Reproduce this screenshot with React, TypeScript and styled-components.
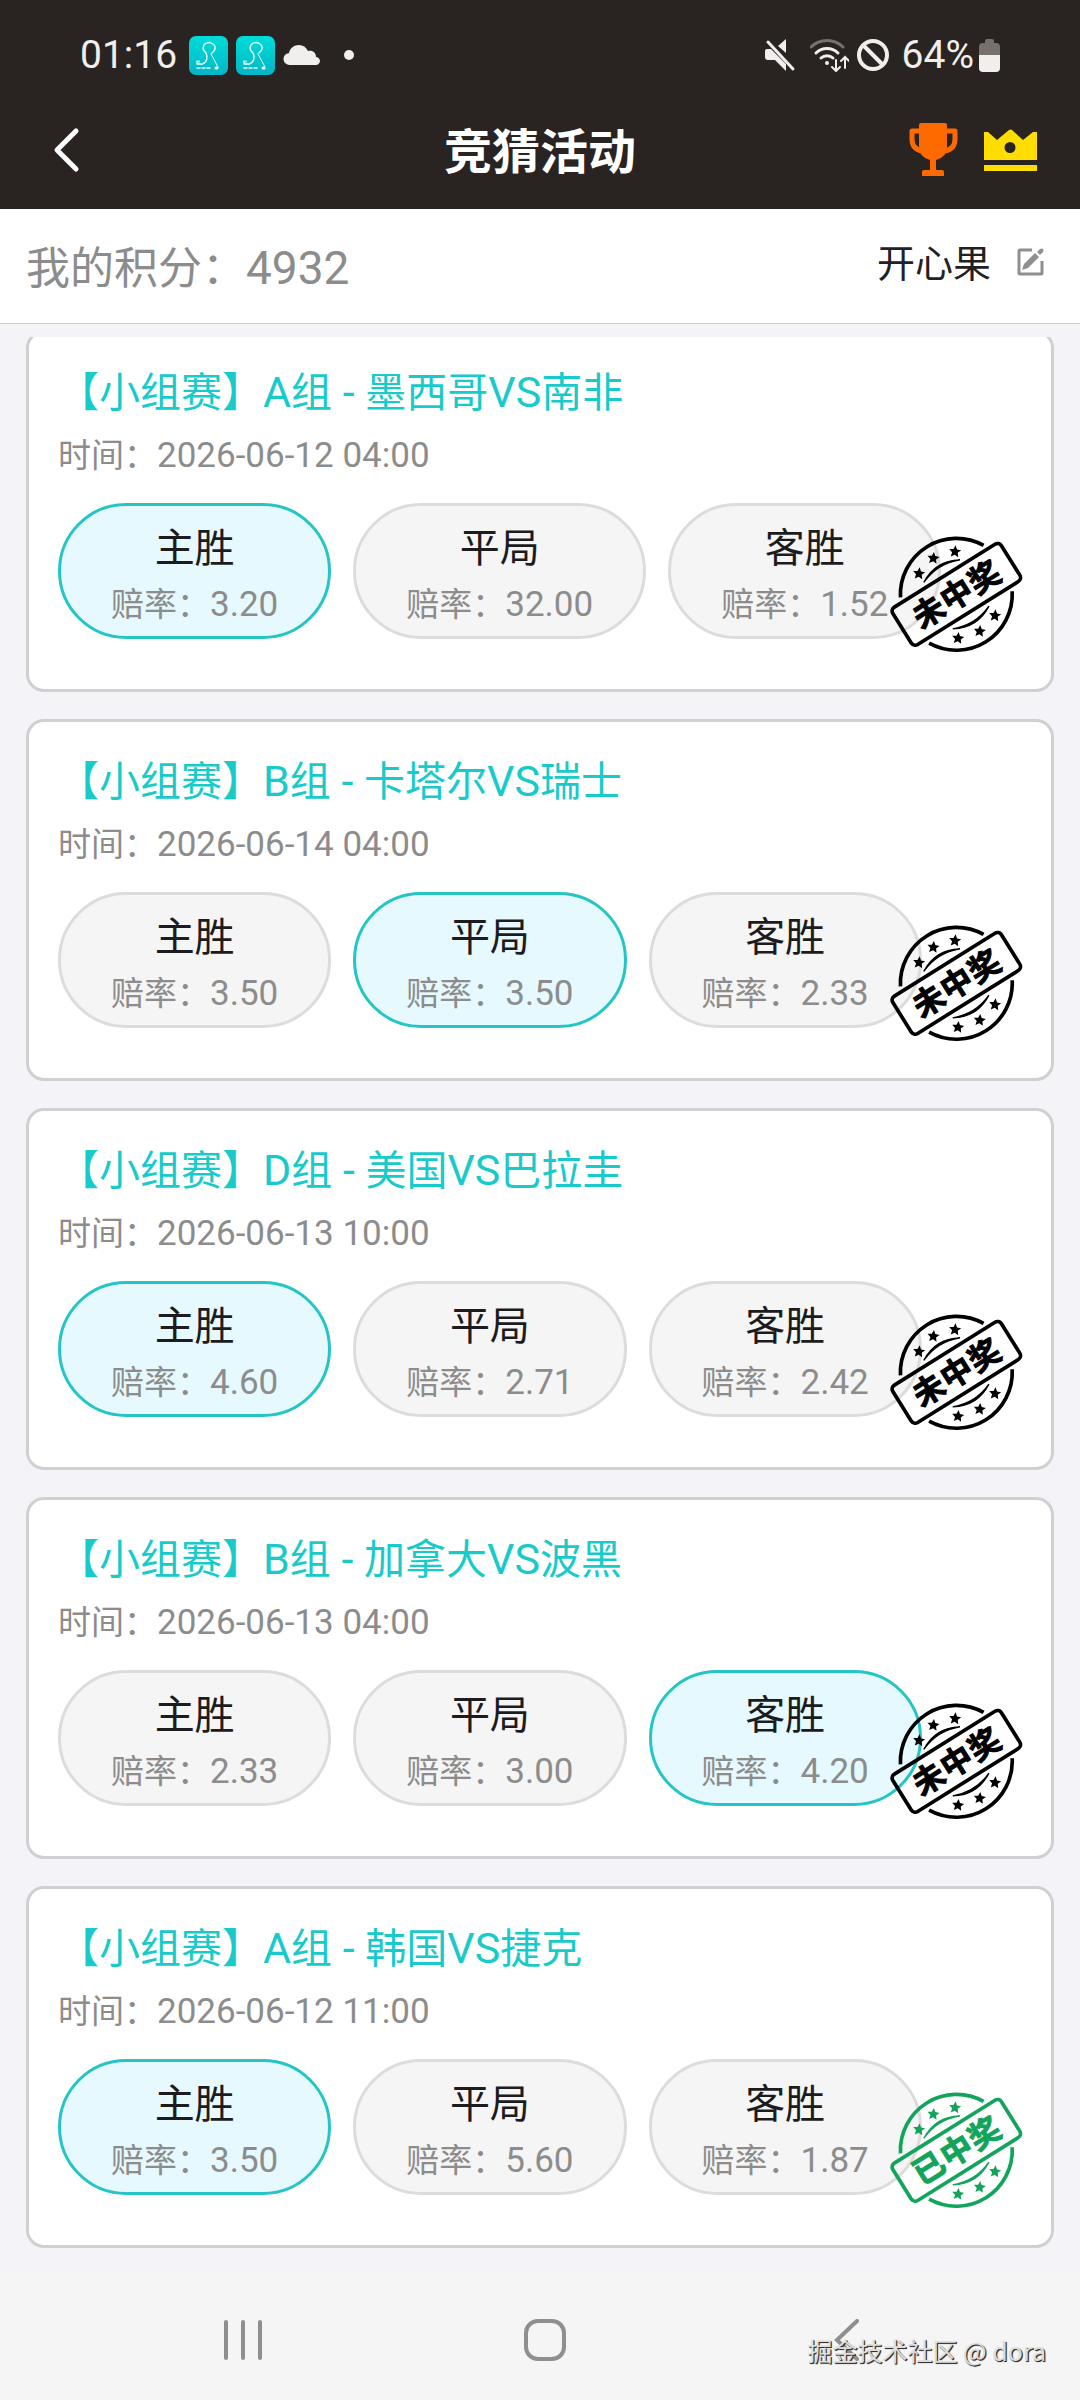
import React, { useState } from "react";
import styled, { createGlobalStyle } from "styled-components";

const GlobalStyle = createGlobalStyle`
  * {
    box-sizing: border-box;
  }

  body {
    margin: 0;
    background: #f4f3f8;
    font-family: Roboto, "Noto Sans CJK SC", sans-serif;
  }

  button {
    margin: 0;
    padding: 0;
    border: none;
    background: none;
    font-family: inherit;
    cursor: pointer;
  }
`;

const Page = styled.div`
  position: relative;
  display: flex;
  flex-direction: column;
  min-height: 100vh;
`;

const TopArea = styled.div`
  background: #292421;
  color: #ffffff;
`;

const StatusBar = styled.div`
  display: flex;
  align-items: center;
  justify-content: space-between;
  height: 93px;
  padding: 17px 80px 0 79px;
  color: #f1efed;
  font-size: 39px;
  line-height: 44px;
`;

const StatusGroup = styled.div`
  display: flex;
  align-items: center;
  gap: 8px;
`;

const Battery = styled.div`
  display: flex;
  align-items: center;
  gap: 5px;
  padding-left: 4px;
`;

const Clock = styled.span`
  padding: 0 4px 0 1px;
`;

const Header = styled.header`
  display: grid;
  grid-template-columns: 1fr auto 1fr;
  align-items: center;
  height: 116px;
  padding: 0 43px;
`;

const HeaderTitle = styled.h1`
  margin: 0;
  padding-top: 3px;
  font-size: 48px;
  font-weight: 700;
  line-height: 60px;
`;

const HeaderActions = styled.div`
  display: flex;
  align-items: center;
  justify-content: flex-end;
  gap: 26px;
  padding-bottom: 2px;
`;

const IconButton = styled.button`
  display: flex;
  align-items: center;
  justify-self: start;
`;

const PointBar = styled.div`
  display: flex;
  align-items: center;
  justify-content: space-between;
  height: 115px;
  padding: 0 36px 0 26px;
  border-bottom: 1px solid #cfcfcf;
  background: #ffffff;
`;

//한자와 숫자의 글자 크기가 달라서 분리
const Num = styled.span<{ $size: number }>`
  font-size: ${(props) => props.$size}px;
  line-height: 1;
`;

const Point = styled.span`
  padding-top: 6px;
  color: #8c8c8c;
  font-size: 44px;
  line-height: 60px;
`;

const UserName = styled.div`
  display: flex;
  align-items: center;
  gap: 26px;
  padding-bottom: 4px;
  color: #1f2124;
  font-size: 38px;
  line-height: 50px;
`;

const Scroller = styled.main`
  flex: 1;
  margin-top: 13px;
  overflow: hidden;
`;

const MatchList = styled.div`
  display: flex;
  flex-direction: column;
  gap: 27px;
  margin-top: -7px;
  padding: 0 26px 25px;
`;

const Card = styled.section`
  position: relative;
  padding: 30px 29px 50px;
  border: 3px solid #d0d0d2;
  border-radius: 18px;
  background: #ffffff;
`;

const CardTitle = styled.h2`
  margin: 0 0 13px;
  color: #18cbca;
  font-size: 41px;
  font-weight: 400;
  line-height: 60px;
`;

const CardTime = styled.div`
  margin-bottom: 27px;
  color: #8c8c8c;
  font-size: 33px;
  line-height: 40px;
`;

const Options = styled.div`
  display: flex;
  gap: 22px;
`;

const Option = styled.button<{ $active: boolean }>`
  display: flex;
  flex-direction: column;
  align-items: center;
  gap: 11px;
  padding: 18px 50px 11px;
  border: 3px solid ${(props) => (props.$active ? "#25c5c5" : "#dcdcdc")};
  border-radius: 68px;
  background: ${(props) => (props.$active ? "#e5f9fe" : "#f5f5f5")};
`;

const OptionName = styled.span`
  color: #1c1c1e;
  font-size: 40px;
  line-height: 50px;
`;

const OptionOdds = styled.span`
  color: #8c8c8c;
  font-size: 33px;
  line-height: 40px;
`;

const StampBox = styled.svg`
  position: absolute;
  right: 28px;
  bottom: 36px;
  font-family: "Noto Sans CJK SC", sans-serif;
`;

const NavBar = styled.nav`
  display: grid;
  grid-template-columns: repeat(3, 1fr);
  align-items: center;
  justify-items: center;
  height: 128px;
  padding: 6px 82px 0 92px;
  background: #f5f5f5;
`;

const NavButton = styled.button`
  display: flex;
`;

const Watermark = styled.div`
  position: absolute;
  right: 34px;
  bottom: 33px;
  color: #dedede;
  font-family: "Noto Sans CJK SC", sans-serif;
  font-size: 25px;
  line-height: 36px;
  text-shadow: 1px 1px 0 #333333, 1px 1px 1px #333333;
`;

interface MatchType {
  matchId: number;
  group: string;
  teams: [string, string];
  time: string;
  odds: string[];
  picked: number;
  win: boolean;
}

const optionNames = ["主胜", "平局", "客胜"];

const matches: MatchType[] = [
  {
    matchId: 1,
    group: "A",
    teams: ["墨西哥", "南非"],
    time: "2026-06-12 04:00",
    odds: ["3.20", "32.00", "1.52"],
    picked: 0,
    win: false,
  },
  {
    matchId: 2,
    group: "B",
    teams: ["卡塔尔", "瑞士"],
    time: "2026-06-14 04:00",
    odds: ["3.50", "3.50", "2.33"],
    picked: 1,
    win: false,
  },
  {
    matchId: 3,
    group: "D",
    teams: ["美国", "巴拉圭"],
    time: "2026-06-13 10:00",
    odds: ["4.60", "2.71", "2.42"],
    picked: 0,
    win: false,
  },
  {
    matchId: 4,
    group: "B",
    teams: ["加拿大", "波黑"],
    time: "2026-06-13 04:00",
    odds: ["2.33", "3.00", "4.20"],
    picked: 2,
    win: false,
  },
  {
    matchId: 5,
    group: "A",
    teams: ["韩国", "捷克"],
    time: "2026-06-12 11:00",
    odds: ["3.50", "5.60", "1.87"],
    picked: 0,
    win: true,
  },
];

const AppIcon = ({ id }: { id: string }) => (
  <svg width="39" height="39" viewBox="0 0 39 39">
    <defs>
      <linearGradient id={id} x1="0" y1="0" x2="0" y2="1">
        <stop offset="0" stopColor="#00ddd8" />
        <stop offset="1" stopColor="#04b5c6" />
      </linearGradient>
    </defs>
    <rect width="39" height="39" rx="7" fill={`url(#${id})`} />
    <g fill="none" stroke="#e6fffd" strokeLinecap="round">
      <path
        d="M23 17c4-3 4-7 1-9-3-2-7-2-9 1-2 4 0 6 2 8 2 4 1 10-4 11"
        strokeWidth="1.5"
      />
      <path d="M13 28H8M8 27v-2M10 26v-1" strokeWidth="1.4" />
      <path d="M22 18l7 13" strokeWidth="1" />
      <path d="M8 32h15" strokeWidth="1.4" strokeDasharray="3 2" />
      <path d="M27 32h1" strokeWidth="3" />
    </g>
  </svg>
);

const starPath = (cx: number, cy: number) => {
  const points: string[] = [];
  for (let i = 0; i < 10; i++) {
    const r = i % 2 === 0 ? 19 : 9;
    const angle = (Math.PI / 5) * i - Math.PI / 2 + 0.1;
    points.push(`${cx + r * Math.cos(angle)},${cy + r * Math.sin(angle)}`);
  }
  return points.join(" ");
};

const stars = [
  [147, 161],
  [190, 115],
  [255, 95],
  [264, 355],
  [329, 334],
  [375, 287],
];

const Stamp = ({ win }: { win: boolean }) => {
  const color = win ? "#12a45a" : "#000000";

  return (
    <StampBox width="133" height="118" viewBox="60 45 399 354">
      {stars.map(([x, y]) => (
        <polygon key={`${x}-${y}`} points={starPath(x, y)} fill={color} />
      ))}
      <g transform="translate(259 223) rotate(-32)">
        <g fill="none" stroke={color} strokeWidth="11">
          <path d="M-147-81A168 168 0 0 1 147-81" />
          <path d="M147 81A168 168 0 0 1-147 81" />
          <rect x="-192" y="-66" width="384" height="132" rx="14" />
        </g>
        <g fill={color} stroke={color} strokeWidth="4">
          <path d="M-64-82Q0-120 64-82Q0-109-64-82z" />
          <path d="M-64 82Q0 120 64 82Q0 109-64 82z" />
          <text
            x="-98 0 98"
            y="35"
            fontSize="94"
            fontWeight="700"
            strokeWidth="3"
            textAnchor="middle"
          >
            {win ? "已中奖" : "未中奖"}
          </text>
        </g>
      </g>
    </StampBox>
  );
};

const MatchCard = ({ match }: { match: MatchType }) => {
  const [picked, setPicked] = useState<number>(match.picked);

  return (
    <Card>
      <CardTitle>
        【小组赛】<Num $size={43}>{match.group}</Num>组
        <Num $size={43}> - </Num>
        {match.teams[0]}
        <Num $size={43}>VS</Num>
        {match.teams[1]}
      </CardTitle>
      <CardTime>
        时间：<Num $size={35}>{match.time}</Num>
      </CardTime>
      <Options>
        {optionNames.map((name, index) => (
          <Option
            key={name}
            type="button"
            $active={picked === index}
            aria-pressed={picked === index}
            onClick={() => setPicked(index)}
          >
            <OptionName>{name}</OptionName>
            <OptionOdds>
              赔率：<Num $size={35}>{match.odds[index]}</Num>
            </OptionOdds>
          </Option>
        ))}
      </Options>
      <Stamp win={match.win} />
    </Card>
  );
};

const App = () => {
  return (
    <Page>
      <GlobalStyle />
      <TopArea>
        <StatusBar>
          <StatusGroup>
            <Clock>01:16</Clock>
            <AppIcon id="app1" />
            <AppIcon id="app2" />
            <svg width="80" height="22" viewBox="0 0 80 22" fill="#f1efed">
              <path d="M7 21a6 6 0 0 1-1-12C7 4 11 1 16 1c4 0 7 2 9 6 5-1 8 2 8 6 2 0 4 2 4 4s-2 4-4 4z" />
              <circle cx="66" cy="11" r="5" />
            </svg>
          </StatusGroup>
          <StatusGroup>
            <svg width="37" height="33" viewBox="0 0 37 33" fill="#f1efed">
              <path d="M0 12q0-2 2-2h4l15 15v7L10 21H3q-3 0-3-3zM21 0v14l-8-7z" />
              <path
                d="M3 3l25 27"
                stroke="#f1efed"
                strokeWidth="3"
                strokeLinecap="round"
              />
            </svg>
            <svg
              width="39"
              height="33"
              viewBox="0 0 39 33"
              fill="none"
              stroke="#f1efed"
              strokeWidth="3"
              strokeLinecap="round"
            >
              <path d="M1 8a23 23 0 0 1 32 0" stroke="#77716e" />
              <path d="M6 14a16 16 0 0 1 22 0M11 19a9 9 0 0 1 12 0" />
              <path
                d="M26 21v10M22 28l4 4 4-4M35 29V19M31 22l4-4 4 4"
                strokeWidth="2"
              />
              <circle cx="17" cy="24" r="2" fill="#f1efed" stroke="none" />
            </svg>
            <svg
              width="33"
              height="33"
              viewBox="0 0 33 33"
              fill="none"
              stroke="#f1efed"
              strokeWidth="4"
            >
              <circle cx="16" cy="16" r="14" />
              <path d="M6 6l20 20" />
            </svg>
            <Battery>
              <span>64%</span>
              <svg width="21" height="33" viewBox="0 0 21 33">
                <path
                  d="M6 2q0-2 2-2h5q2 0 2 2v2h2q4 0 4 4v9H0V8q0-4 4-4h2z"
                  fill="#77716e"
                />
                <path d="M0 16h21v13q0 4-4 4H4q-4 0-4-4z" fill="#f1efed" />
              </svg>
            </Battery>
          </StatusGroup>
        </StatusBar>
        <Header>
          <IconButton type="button" aria-label="返回">
            <svg
              width="48"
              height="48"
              viewBox="0 0 48 48"
              fill="none"
              stroke="#ffffff"
              strokeWidth="5"
              strokeLinecap="round"
              strokeLinejoin="round"
            >
              <path d="M33 4L14 23l19 19" />
            </svg>
          </IconButton>
          <HeaderTitle>竞猜活动</HeaderTitle>
          <HeaderActions>
            <IconButton type="button" aria-label="奖杯">
              <svg width="49" height="54" viewBox="0 0 49 54" fill="#ff6a00">
                <path d="M10 2q0-2 2-2h24q2 0 2 2v22q0 10-11 13v10h6q2 0 2 2v4H13v-4q0-2 2-2h6V37q-11-3-11-13z" />
                <path
                  d="M11 8H3v8q0 10 10 12M38 8h8v8q0 10-10 12"
                  fill="none"
                  stroke="#ff6a00"
                  strokeWidth="5"
                  strokeLinejoin="round"
                />
              </svg>
            </IconButton>
            <IconButton type="button" aria-label="排行">
              <svg width="53" height="42" viewBox="0 0 53 42" fill="#ffdd00">
                <path
                  fillRule="evenodd"
                  d="M0 3h4l9 8L25 1q2-1 3 0l11 10 10-8h4v28H0zM26 13a5 5 0 1 0 0 11 5 5 0 0 0 0-11z"
                />
                <path d="M0 36h53v6H0z" />
              </svg>
            </IconButton>
          </HeaderActions>
        </Header>
      </TopArea>
      <PointBar>
        <Point>
          我的积分：<Num $size={46}>4932</Num>
        </Point>
        <UserName>
          开心果
          <IconButton type="button" aria-label="编辑">
            <svg
              width="27"
              height="32"
              viewBox="0 0 27 32"
              fill="none"
              stroke="#8f8f8f"
              strokeWidth="3"
            >
              <path d="M15 2H3q-1 0-1 1v22q0 1 1 1h21q1 0 1-1V13" />
              <path
                d="M5 22l2-6L18 5l4 4L11 20z"
                fill="#8f8f8f"
                stroke="none"
              />
              <path
                d="M20 4l3-3q2-1 3 0 1 2 0 3l-3 3z"
                fill="#8f8f8f"
                stroke="none"
              />
            </svg>
          </IconButton>
        </UserName>
      </PointBar>
      <Scroller>
        <MatchList>
          {matches.map((match) => (
            <MatchCard key={match.matchId} match={match} />
          ))}
        </MatchList>
      </Scroller>
      <NavBar>
        <NavButton type="button" aria-label="最近任务">
          <svg
            width="42"
            height="42"
            viewBox="0 0 42 42"
            stroke="#8f8f8f"
            strokeWidth="4"
            strokeLinecap="round"
          >
            <path d="M4 3v36M21 3v36M38 3v36" />
          </svg>
        </NavButton>
        <NavButton type="button" aria-label="主页">
          <svg
            width="42"
            height="42"
            viewBox="0 0 42 42"
            fill="none"
            stroke="#8f8f8f"
            strokeWidth="4"
          >
            <rect x="2" y="2" width="38" height="38" rx="12" />
          </svg>
        </NavButton>
        <NavButton type="button" aria-label="后退">
          <svg
            width="26"
            height="42"
            viewBox="0 0 26 42"
            fill="none"
            stroke="#8f8f8f"
            strokeWidth="4"
            strokeLinecap="round"
          >
            <path d="M23 2L3 21l20 19" />
          </svg>
        </NavButton>
      </NavBar>
      <Watermark>掘金技术社区 @ dora</Watermark>
    </Page>
  );
};

export default App;
